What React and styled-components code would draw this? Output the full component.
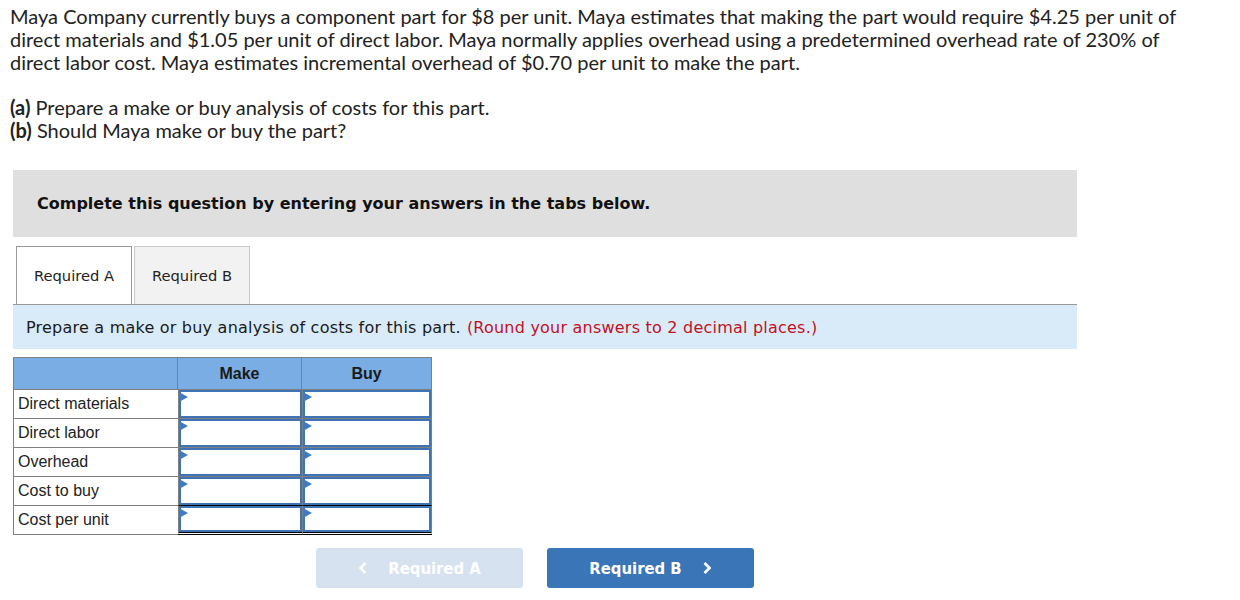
import React from "react";
import styled, { createGlobalStyle } from "styled-components";

const Global = createGlobalStyle`
  html, body { margin: 0; padding: 0; background: #fff; }
  body { font-family: Lato, "Liberation Sans", sans-serif; color: #1a1a1a; }
  * { box-sizing: border-box; }
`;

const Page = styled.div`
  width: 1240px;
  padding: 5px 0 0 10px;
`;

const Para = styled.p`
  margin: 0 0 22px 0;
  width: 1172px;
  font-family: Lato, "Liberation Sans", sans-serif;
  font-size: 20px;
  line-height: 23px;
  color: #222;
`;

const Part = styled.span`
  font-weight: 700;
`;

const Panel = styled.div`
  margin-left: 3px;
  margin-top: 28px;
  width: 1064px;
`;

const Banner = styled.div`
  background: #dfdfdf;
  height: 67px;
  display: flex;
  align-items: center;
  padding-left: 24px;
  font-family: "DejaVu Sans", Verdana, sans-serif;
  font-weight: 700;
  font-size: 16px;
  color: #111;
`;

const TabBar = styled.div`
  display: flex;
  gap: 2px;
  margin-top: 9px;
  padding-left: 3px;
  border-bottom: 1px solid #999;
`;

const Tab = styled.div`
  width: 116px;
  height: 58px;
  display: flex;
  align-items: center;
  justify-content: center;
  font-family: "DejaVu Sans", Tahoma, sans-serif;
  font-size: 14.7px;
  color: #222;
  background: ${(p) => (p.$active ? "#fff" : "#f2f2f2")};
  border: 1px solid ${(p) => (p.$active ? "#999" : "#c9c9c9")};
  border-bottom: none;
  margin-bottom: ${(p) => (p.$active ? "-1px" : "0")};
`;

const Instruction = styled.div`
  background: #d9ebf9;
  height: 44px;
  display: flex;
  align-items: center;
  padding-left: 13px;
  font-family: "DejaVu Sans", Tahoma, sans-serif;
  font-size: 16px;
  letter-spacing: 0.22px;
  color: #1a1a1a;
`;

const Red = styled.span`
  color: #c0111f;
  margin-left: 6px;
`;

const Table = styled.div`
  margin-top: 8px;
  display: grid;
  grid-template-columns: 165px 124px 130px;
  width: 419px;
  font-family: "Liberation Sans", Arial, sans-serif;
`;

const HeadCell = styled.div`
  background: #7aade3;
  height: 33px;
  border: 1px solid #7f7f7f;
  border-left: ${(p) => (p.$first ? "1px solid #7f7f7f" : "none")};
  display: flex;
  align-items: center;
  justify-content: center;
  font-weight: 700;
  font-size: 16px;
  color: #1a1a1a;
`;

const LabelCell = styled.div`
  height: 29px;
  border-left: 1px solid #7f7f7f;
  border-bottom: 1px solid #7f7f7f;
  display: flex;
  align-items: center;
  padding-left: 4px;
  font-size: 16px;
  color: #222;
`;

const InputWrap = styled.div`
  position: relative;
  height: 29px;
  border-left: 1px solid #7f7f7f;
  border-right: ${(p) => (p.$last ? "1px solid #7f7f7f" : "none")};
  border-bottom: ${(p) =>
    p.$double ? "3px double #000" : p.$single ? "1px solid #000" : "1px solid #7f7f7f"};
`;

const Input = styled.div`
  height: 100%;
  border: 2px solid #3e73b5;
  background: #fff;
`;

const Marker = styled.span`
  position: absolute;
  z-index: 1;
  left: 0;
  top: 2px;
  width: 0;
  height: 0;
  border-top: 5.5px solid transparent;
  border-bottom: 5.5px solid transparent;
  border-left: 9px solid #3e7bc4;
`;

const Nav = styled.div`
  display: flex;
  gap: 24px;
  margin-top: 13px;
  margin-left: 303px;
`;

const NavButton = styled.div`
  width: 207px;
  height: 40px;
  border-radius: 3px;
  display: flex;
  align-items: center;
  justify-content: center;
  gap: 20px;
  font-family: "DejaVu Sans Condensed", Tahoma, sans-serif;
  font-weight: 700;
  font-size: 16.5px;
  color: #fff;
  background: ${(p) => (p.$disabled ? "#d6e2f0" : "#3a75b8")};
`;

const Chevron = ({ dir }) => (
  <svg width="10" height="14" viewBox="0 0 10 14">
    <path
      d={dir === "left" ? "M7.5 2 L2.5 7 L7.5 12" : "M2.5 2 L7.5 7 L2.5 12"}
      fill="none"
      stroke="#fff"
      strokeWidth="2.6"
    />
  </svg>
);

const rows = ["Direct materials", "Direct labor", "Overhead", "Cost to buy", "Cost per unit"];

export default function App() {
  return (
    <>
      <Global />
      <Page>
        <Para>
          Maya Company currently buys a component part for $8 per unit. Maya estimates that making the part would
          require $4.25 per unit of direct materials and $1.05 per unit of direct labor. Maya normally applies overhead
          using a predetermined overhead rate of 230% of direct labor cost. Maya estimates incremental overhead of $0.70
          per unit to make the part.
        </Para>
        <Para>
          <Part>(a)</Part> Prepare a make or buy analysis of costs for this part.
          <br />
          <Part>(b)</Part> Should Maya make or buy the part?
        </Para>
        <Panel>
          <Banner>Complete this question by entering your answers in the tabs below.</Banner>
          <TabBar>
            <Tab $active>Required A</Tab>
            <Tab>Required B</Tab>
          </TabBar>
          <Instruction>
            Prepare a make or buy analysis of costs for this part.
            <Red>(Round your answers to 2 decimal places.)</Red>
          </Instruction>
          <Table>
            <HeadCell $first />
            <HeadCell>Make</HeadCell>
            <HeadCell>Buy</HeadCell>
            {rows.map((r, i) => (
              <React.Fragment key={r}>
                <LabelCell>{r}</LabelCell>
                {[0, 1].map((c) => (
                  <InputWrap key={c} $last={c === 1} $single={i === 3} $double={i === 4}>
                    <Input />
                    <Marker />
                  </InputWrap>
                ))}
              </React.Fragment>
            ))}
          </Table>
          <Nav>
            <NavButton $disabled>
              <Chevron dir="left" />
              Required A
            </NavButton>
            <NavButton>
              Required B
              <Chevron dir="right" />
            </NavButton>
          </Nav>
        </Panel>
      </Page>
    </>
  );
}
